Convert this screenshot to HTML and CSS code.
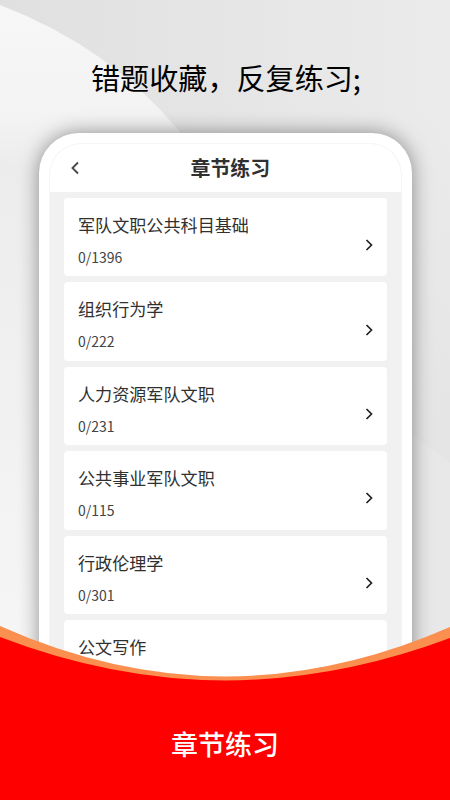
FILE: index.html
```html
<!DOCTYPE html>
<html lang="zh-CN">
<head>
<meta charset="utf-8">
<title>章节练习</title>
<link rel="stylesheet" href="styles.css">
</head>
<body>
<main class="poster">
  <svg class="backdrop" viewBox="0 0 450 800" aria-hidden="true">
    <defs>
      <linearGradient id="base" x1="0" y1="0" x2="1" y2="0"><stop offset="0" stop-color="#e0e0e0"/><stop offset="1" stop-color="#ebebeb"/></linearGradient>
      <linearGradient id="side" x1="0" y1="0" x2="0" y2="1"><stop offset="0" stop-color="#e5e5e5" stop-opacity="0"/><stop offset="1" stop-color="#e5e5e5"/></linearGradient>
      <linearGradient id="sweep" x1="0" y1="0" x2="0" y2="1"><stop offset="0" stop-color="#f7f7f7"/><stop offset=".5" stop-color="#f3f3f3"/><stop offset="1" stop-color="#e6e6e6"/></linearGradient>
      <linearGradient id="low" x1="0" y1="0" x2="0" y2="1"><stop offset="0" stop-color="#ececec"/><stop offset="1" stop-color="#f6f6f6"/></linearGradient>
    </defs>
    <path fill="url(#base)" d="M0 0H450V800H0Z"/>
    <path fill="url(#side)" d="M380 100H450V420H380Z"/>
    <path fill="#e5e5e5" d="M380 420H450V800H380Z"/>
    <path fill="url(#sweep)" d="M0 5Q110 47 180 132L220 220H0Z"/>
    <path fill="url(#low)" d="M0 160L60 178V660H0Z"/>
    <path fill="#e8e8e8" d="M400 425L450 463V660H400Z"/>
  </svg>
  <h1 class="headline">错题收藏，反复练习;</h1>
  <section class="phone">
    <div class="screen">
      <header class="bar">
        <svg class="back" viewBox="0 0 10 14"><path d="M8 1.5L2.5 7L8 12.5"/></svg>
        <h2 class="title">章节练习</h2>
      </header>
      <ul class="list">
        <li class="card"><div><p class="name">军队文职公共科目基础</p><p class="count">0/1396</p></div><svg class="next" viewBox="0 0 8 12"><path d="M1.5 1L6.5 6L1.5 11"/></svg></li>
        <li class="card"><div><p class="name">组织行为学</p><p class="count">0/222</p></div><svg class="next" viewBox="0 0 8 12"><path d="M1.5 1L6.5 6L1.5 11"/></svg></li>
        <li class="card"><div><p class="name">人力资源军队文职</p><p class="count">0/231</p></div><svg class="next" viewBox="0 0 8 12"><path d="M1.5 1L6.5 6L1.5 11"/></svg></li>
        <li class="card"><div><p class="name">公共事业军队文职</p><p class="count">0/115</p></div><svg class="next" viewBox="0 0 8 12"><path d="M1.5 1L6.5 6L1.5 11"/></svg></li>
        <li class="card"><div><p class="name">行政伦理学</p><p class="count">0/301</p></div><svg class="next" viewBox="0 0 8 12"><path d="M1.5 1L6.5 6L1.5 11"/></svg></li>
        <li class="card"><div><p class="name">公文写作</p></div></li>
      </ul>
    </div>
  </section>
  <footer class="footer">
    <svg class="curve" viewBox="0 0 450 176" aria-hidden="true">
      <path fill="#fb8f50" d="M0 2Q112 52 225 52.500Q338 52 450 3V176H0Z"/>
      <path fill="#f00" d="M0 13Q112 56 225 56.500Q338 56 450 14V176H0Z"/>
    </svg>
    <p class="caption">章节练习</p>
  </footer>
</main>
</body>
</html>
```
FILE: styles.css
```css
* { box-sizing: border-box; margin: 0; padding: 0; }
body { width: 450px; height: 800px; overflow: hidden; font-family: "Noto Sans CJK SC", sans-serif; color: #303030; }
.poster { position: relative; display: flex; flex-direction: column; align-items: center; width: 450px; height: 800px; overflow: hidden; isolation: isolate; }
.backdrop { position: absolute; inset: 0; z-index: -1; width: 450px; height: 800px; }
.headline { align-self: flex-start; height: 133px; padding: 56px 0 0 91px; font-size: 29.1px; line-height: 42px; font-weight: 400; color: #000; white-space: nowrap; }
.phone { flex: none; width: 373px; height: 580px; padding: 10.500px 11px 0; background: #fff; border-radius: 40px 40px 0 0; box-shadow: 0 0 20px rgba(0, 0, 0, .42); }
.screen { height: 100%; overflow: hidden; background: #f1f1f1; border-radius: 31px 31px 0 0; box-shadow: 0 0 0 1px #f5f5f5; }
.bar { display: flex; align-items: center; height: 48.500px; padding-left: 20px; background: #fff; }
.back { width: 10px; height: 14px; }
.back path, .next path { fill: none; stroke: #4a4a4a; stroke-width: 1.9; }
.title { margin-left: 111px; font-size: 19.900px; line-height: 28px; font-weight: 700; }
.list { display: flex; flex-direction: column; gap: 6px; padding: 6px 13.500px 0 14px; list-style: none; }
.card { display: flex; flex: none; align-items: center; justify-content: space-between; height: 78.400px; padding: 0 14px 0 14.500px; background: #fff; border-radius: 4px; }
.card > div { align-self: flex-start; padding-top: 14px; }
.name { font-size: 17.100px; line-height: 26px; }
.count { margin-top: 9px; font: 14px/20px "Noto Sans CJK SC", sans-serif; color: #444; }
.next { width: 8px; height: 12px; margin-top: 16px; }
.next path { stroke: #222; stroke-width: 1.7; }
.footer { position: absolute; z-index: 1; left: 0; bottom: 0; width: 450px; height: 176px; display: flex; justify-content: center; }
.curve { position: absolute; inset: 0; width: 450px; height: 176px; z-index: -1; }
.caption { padding-top: 101px; font-size: 27px; line-height: 38px; font-weight: 500; color: #fff; }
```
